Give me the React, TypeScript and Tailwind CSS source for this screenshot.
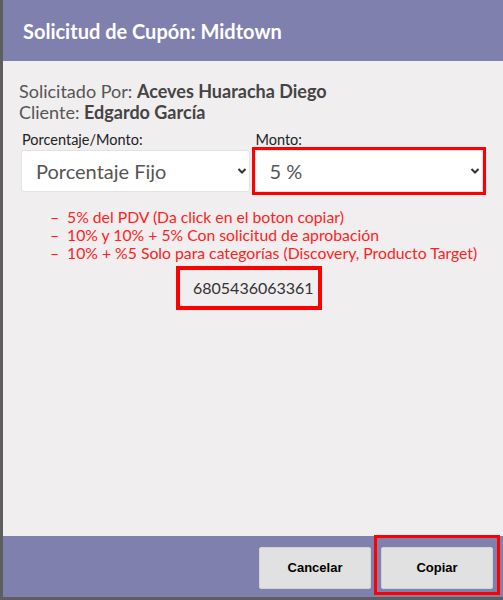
import React from "react";

const notes = [
  "5% del PDV (Da click en el boton copiar)",
  "10% y 10% + 5% Con solicitud de aprobación",
  "10% + %5 Solo para categorías (Discovery, Producto Target)",
];

function Chevron() {
  return (
    <svg
      width="10"
      height="7"
      viewBox="0 0 10 7"
      className="absolute right-[3px] top-1/2 -translate-y-1/2 pointer-events-none"
    >
      <path d="M1.5 1.5 L5 5 L8.5 1.5" fill="none" stroke="#333" strokeWidth="2" />
    </svg>
  );
}

export default function App() {
  return (
    <div className="w-[503px] h-[600px] bg-[#5e5e5e] pl-[3px] pb-[3px] flex flex-col font-['Lato',sans-serif]">
      <div className="flex-1 flex flex-col">
        {/* header */}
        <header className="h-[61px] bg-[#7f80ad] flex items-center pl-[20px]">
          <h1 className="text-white font-bold text-[20px]">Solicitud de Cupón: Midtown</h1>
        </header>

        {/* body */}
        <main className="flex-1 bg-[#f0eeef] pt-[20px] px-[16px]">
          <div className="text-[18px] leading-[21px] text-[#555]">
            <p>
              Solicitado Por: <span className="font-bold text-[#444]">Aceves Huaracha Diego</span>
            </p>
            <p>
              Cliente: <span className="font-bold text-[#444]">Edgardo García</span>
            </p>
          </div>

          <div className="grid grid-cols-2 gap-[5px] pl-[2px] pr-[4px] mt-[8px]">
            <div>
              <label className="block text-[14.5px] leading-[18px] text-[#222] pl-[1px]">Porcentaje/Monto:</label>
              <div className="relative mt-[1px]">
                <select className="appearance-none w-full h-[42px] bg-white border border-[#e2e2e2] rounded-[3px] pl-[14px] text-[20px] text-[#555] outline-none">
                  <option>Porcentaje Fijo</option>
                </select>
                <Chevron />
              </div>
            </div>
            <div>
              <label className="block text-[14.5px] leading-[18px] text-[#222] pl-[1px]">Monto:</label>
              <div className="relative mt-[1px]">
                <select className="appearance-none w-full h-[42px] bg-white border border-[#e2e2e2] rounded-[3px] pl-[14px] text-[20px] text-[#555] outline-none">
                  <option>5 %</option>
                </select>
                <Chevron />
                <div className="absolute -inset-[3px] border-[3px] border-[#ff0000] pointer-events-none" />
              </div>
            </div>
          </div>

          <ul className="mt-[16px] pl-[31px] text-[15.75px] leading-[18px] text-[#ff2222]">
            {notes.map((n, i) => (
              <li key={i} className="flex">
                <span className="w-[17px] shrink-0">–</span>
                <span>{n}</span>
              </li>
            ))}
          </ul>

          <div className="flex justify-center mt-[4px] pr-[8px]">
            <div className="border-[4px] border-[#ff0000] h-[44px] w-[146px] flex items-center pl-[13px] text-[16px] text-[#333]">
              6805436063361
            </div>
          </div>
        </main>

        {/* footer */}
        <footer className="h-[61px] bg-[#7f80ad] flex justify-end items-start pt-[11px] pr-[10px] gap-[10px]">
          <button className="w-[112px] h-[42px] bg-[#e1e1e1] border border-[#d2d2d2] rounded-[2px] font-['Liberation_Sans',sans-serif] font-bold text-[13px] text-black">
            Cancelar
          </button>
          <div className="relative">
            <div className="absolute -left-[7px] -right-[7px] -top-[12px] -bottom-[6px] border-[3px] border-[#ff0000]" />
            <button className="relative w-[112px] h-[42px] bg-[#e1e1e1] border border-[#d2d2d2] rounded-[2px] font-['Liberation_Sans',sans-serif] font-bold text-[13px] text-black">
              Copiar
            </button>
          </div>
        </footer>
      </div>
    </div>
  );
}
